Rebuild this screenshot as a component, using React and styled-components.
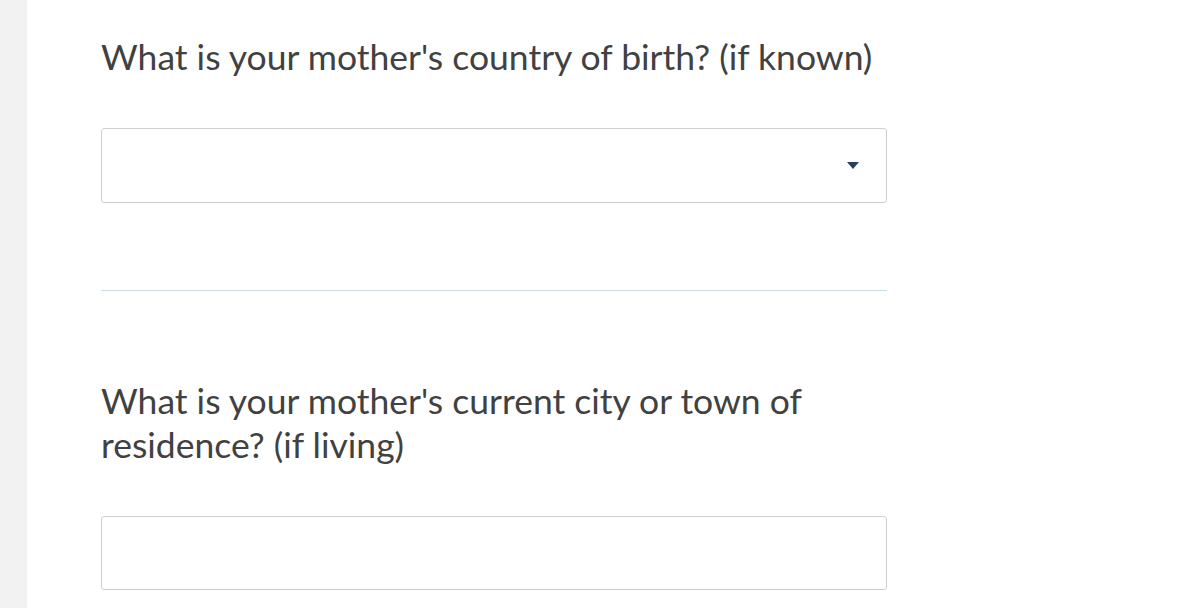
import styled, { createGlobalStyle } from "styled-components"

const Global = createGlobalStyle`
    html, body {
        margin: 0;
        padding: 0;
        background: #ffffff;
        font-family: "Lato", "Open Sans", sans-serif;
    }
    * {
        box-sizing: border-box;
    }
`

export default function App() {
    return (
        <Page>
            <Global />
            <Sidebar />
            <Main>
                <Form>
                    <Question>
                        <Label>What is your mother's country of birth? (if known)</Label>
                        <SelectBox>
                            <Arrow width="12" height="8" viewBox="0 0 12 8">
                                <path d="M0 0 L12 0 L6 7 Z" fill="#26405e" />
                            </Arrow>
                        </SelectBox>
                    </Question>
                    <Divider />
                    <Question>
                        <Label>What is your mother's current city or town of residence? (if living)</Label>
                        <TextBox />
                    </Question>
                </Form>
            </Main>
        </Page>
    )
}

const Page = styled.div`
    display: flex;
    width: 100%;
    height: 100vh;
    overflow: hidden;
`

const Sidebar = styled.div`
    width: 27px;
    flex-shrink: 0;
    background-color: #f2f2f2;
`

const Main = styled.div`
    flex: 1;
    padding: 35px 0 0 74px;
`

const Form = styled.div`
    width: 786px;
    display: flex;
    flex-direction: column;
`

const Question = styled.div`
    display: flex;
    flex-direction: column;
`

const Label = styled.p`
    margin: 0 0 49px 0;
    font-size: 35.5px;
    line-height: 44px;
    color: #414141;
`

const SelectBox = styled.div`
    height: 75px;
    border: 1px solid #cfcfcf;
    border-radius: 3px;
    display: flex;
    align-items: center;
    justify-content: flex-end;
    padding-right: 27px;
`

const Arrow = styled.svg`
    display: block;
`

const Divider = styled.div`
    height: 1px;
    background-color: #cadde8;
    margin: 87px 0 88px 0;
`

const TextBox = styled.div`
    height: 74px;
    border: 1px solid #cfcfcf;
    border-radius: 3px;
`
